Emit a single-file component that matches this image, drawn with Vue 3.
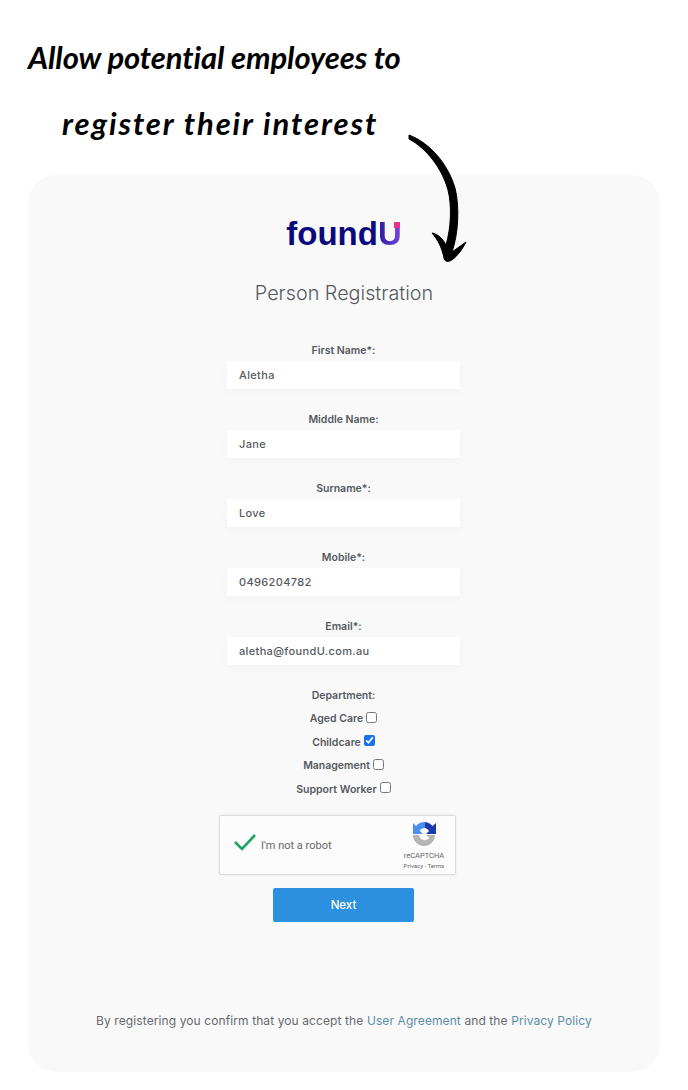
<script setup>
import { ref } from 'vue'

const fields = ref([
  { label: 'First Name*:', value: 'Aletha' },
  { label: 'Middle Name:', value: 'Jane' },
  { label: 'Surname*:', value: 'Love' },
  { label: 'Mobile*:', value: '0496204782' },
  { label: 'Email*:', value: 'aletha@foundU.com.au' },
])

const departments = ref([
  { name: 'Aged Care', checked: false },
  { name: 'Childcare', checked: true },
  { name: 'Management', checked: false },
  { name: 'Support Worker', checked: false },
])
</script>

<template>
  <div class="page">
    <header class="hero">
      <p class="note note-one">Allow potential employees to</p>
      <p class="note note-two">register their interest</p>
    </header>

    <svg class="arrow" width="80" height="140" viewBox="0 0 80 140">
      <path d="M9 5 C 30 13 48 34 55 58 C 60 78 58 105 52 122 L 66 112 C 62 120 56 128 50 131 C 46 132 45 131 44 128 C 42 118 38 110 32 103 C 38 104 43 109 46 115 C 51 98 52 76 48 60 C 42 38 26 18 9 9 Z" fill="#000" stroke="#000" stroke-width="1" stroke-linejoin="round" />
    </svg>

    <main class="card">
      <div class="logo">found<span class="logo-u">U</span></div>
      <h1 class="title">Person Registration</h1>

      <form class="form" @submit.prevent>
        <div v-for="field in fields" :key="field.label" class="field">
          <label class="label">{{ field.label }}</label>
          <input v-model="field.value" class="input" type="text" />
        </div>

        <div class="departments">
          <div class="label">Department:</div>
          <label v-for="dep in departments" :key="dep.name" class="dep">
            {{ dep.name }}
            <input v-model="dep.checked" type="checkbox" class="check" />
          </label>
        </div>

        <div class="captcha">
          <svg class="tick" width="24" height="18" viewBox="0 0 24 18">
            <path d="M2 9 L9 16 L22 2" fill="none" stroke="#1fa463" stroke-width="2.6" />
          </svg>
          <span class="captcha-text">I'm not a robot</span>
          <div class="captcha-brand">
            <svg width="26" height="26" viewBox="0 0 26 26">
              <path d="M2 15 A11 11 0 0 0 24 15 H15 L18.5 18 A6 6 0 0 1 8 15 Z" fill="#b4b4b4" />
              <path d="M14 2 A11 11 0 0 0 5 6 L2 3 V14 H12 L8.5 10.5 A6 6 0 0 1 14 8 Z" fill="#4a90f2" />
              <path d="M14 2 A11 11 0 0 1 21.5 6 L25 3 V14 H15 L18 11 A6 6 0 0 0 14 8 Z" fill="#1c3aa9" />
            </svg>
            <span class="brand-name">reCAPTCHA</span>
            <span class="brand-links">Privacy - Terms</span>
          </div>
        </div>

        <button class="next" type="button">Next</button>
      </form>

      <p class="terms">
        By registering you confirm that you accept the
        <a class="link">User Agreement</a> and the <a class="link">Privacy Policy</a>
      </p>
    </main>
  </div>
</template>

<style>
html,
body {
  margin: 0;
  background: #fff;
}
</style>

<style scoped>
.page {
  position: relative;
  width: 688px;
  height: 1090px;
  overflow: hidden;
  font-family: Inter, 'Noto Sans', sans-serif;
  color: #555a61;
}

.hero {
  height: 175px;
  box-sizing: border-box;
  padding: 35px 0 0 28px;
}

.note {
  margin: 0;
  font-family: Lato, sans-serif;
  font-style: italic;
  font-weight: 700;
  font-size: 31px;
  line-height: 44px;
  letter-spacing: -0.1px;
  color: #000;
  white-space: nowrap;
}

.note-two {
  margin-top: 22px;
  margin-left: 34px;
  letter-spacing: 1.9px;
}

.arrow {
  position: absolute;
  left: 400px;
  top: 130px;
  z-index: 1;
}

.card {
  margin: 0 28px;
  height: 897px;
  box-sizing: border-box;
  padding-top: 41px;
  background: #f9f9f9;
  border-radius: 28px;
  display: flex;
  flex-direction: column;
  align-items: center;
}

.logo {
  height: 36px;
  font-family: 'Liberation Sans', sans-serif;
  font-size: 33px;
  font-weight: 700;
  line-height: 36px;
  color: #0b0a7d;
}

.logo-u {
  position: relative;
  display: inline-block;
  background: linear-gradient(90deg, #2a1a9a, #7b4ae6);
  -webkit-background-clip: text;
  background-clip: text;
  color: transparent;
}

.logo-u::after {
  content: '';
  position: absolute;
  right: 2px;
  top: 6px;
  width: 6px;
  height: 6px;
  background: #ec2f8c;
  box-shadow: 0 -4px 0 1px #f9f9f9;
}

.title {
  margin: 26px 0 0;
  font-size: 19.8px;
  line-height: 30px;
  font-weight: 300;
  color: #55595f;
}

.form {
  margin-top: 33px;
  margin-right: 1px;
  width: 240px;
  display: flex;
  flex-direction: column;
  align-items: center;
}

.field {
  width: 233px;
  height: 69px;
  text-align: center;
}

.label {
  display: block;
  height: 20px;
  font-size: 10.5px;
  line-height: 19px;
  font-weight: 600;
  color: #555a61;
}

.input {
  display: block;
  width: 100%;
  height: 28px;
  box-sizing: border-box;
  padding: 0 12px;
  border: none;
  outline: none;
  background: #fff;
  box-shadow: 0 3px 8px rgba(0, 0, 0, 0.03);
  font-family: inherit;
  font-size: 11px;
  font-weight: 500;
  letter-spacing: 0.35px;
  color: #555a61;
}

.departments {
  margin-top: -1px;
  display: flex;
  flex-direction: column;
  align-items: center;
}

.departments .label {
  height: 22px;
  line-height: 22px;
}

.dep {
  height: 23.5px;
  display: flex;
  align-items: center;
  gap: 3px;
  font-size: 10.5px;
  font-weight: 600;
  color: #555a61;
}

.check {
  width: 11px;
  height: 11px;
  margin: 0 0 3px;
  accent-color: #1a73e8;
}

.captcha {
  margin-top: 14px;
  margin-right: 12px;
  width: 237px;
  height: 60px;
  flex: none;
  box-sizing: border-box;
  background: #fcfcfc;
  border: 1px solid #dcdcdc;
  border-radius: 2px;
  box-shadow: 0 0 3px rgba(0, 0, 0, 0.08);
  display: flex;
  align-items: center;
  padding: 0 8px 0 13px;
}

.tick {
  margin-right: 4px;
  margin-bottom: 6px;
}

.captcha-text {
  font-family: Roboto, sans-serif;
  font-size: 11px;
  color: #666;
  flex: 1;
}

.captcha-brand {
  width: 46px;
  display: flex;
  flex-direction: column;
  align-items: center;
  font-family: Roboto, sans-serif;
  color: #666;
}

.brand-name {
  margin-top: 5px;
  font-size: 7.5px;
  line-height: 10px;
}

.brand-links {
  font-size: 6px;
  line-height: 9px;
  white-space: nowrap;
}

.next {
  margin-top: 13px;
  width: 141px;
  height: 34px;
  border: none;
  border-radius: 2px;
  background: #2d8fe0;
  color: #fff;
  font-family: inherit;
  font-size: 11.5px;
  font-weight: 500;
}

.terms {
  margin: 91px 0 0;
  font-size: 12px;
  letter-spacing: 0.1px;
  line-height: 16px;
  color: #666a70;
  white-space: nowrap;
}

.link {
  color: #5d8ca8;
}
</style>
